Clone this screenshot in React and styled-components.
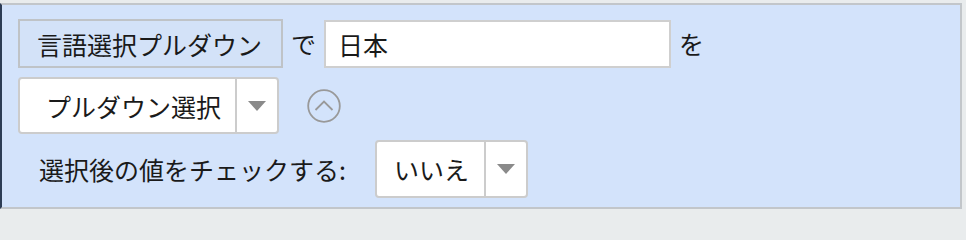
import React from "react";
import styled, { createGlobalStyle } from "styled-components";

const GlobalStyle = createGlobalStyle`
  body {
    margin: 0;
    background: #e9eced;
    font-family: "Noto Sans CJK JP", "Noto Sans", sans-serif;
    color: #1a1a1a;
  }
`;

const Panel = styled.div`
  margin-top: 3px;
  width: 962px;
  box-sizing: border-box;
  background: #d3e3fb;
  border-top: 2px solid #c2c6ca;
  border-bottom: 2px solid #c2c6ca;
  border-right: 2px solid #c2c6ca;
  border-left: 2px solid #2d3d55;
  padding: 14px 16px 9px;
  display: flex;
  flex-direction: column;
  gap: 8px;
`;

const Row = styled.div`
  display: flex;
  align-items: center;
  gap: ${(p) => p.gap || 10}px;
  padding-left: ${(p) => p.indent || 0}px;
  margin-top: ${(p) => p.offset || 0}px;
`;

const Text = styled.span`
  font-size: 25px;
  line-height: 1;
  white-space: nowrap;
`;

const LabelButton = styled.div`
  height: 49px;
  box-sizing: border-box;
  display: flex;
  align-items: center;
  padding: 0 19px 0 17px;
  border: 2px solid #bfc3c7;
  background: #d3e2f8;
  font-size: 25px;
`;

const TextInput = styled.div`
  width: 347px;
  height: 48px;
  box-sizing: border-box;
  display: flex;
  align-items: center;
  padding-left: 12px;
  background: #fff;
  border: 2px solid #cfcfcf;
  font-size: 25px;
`;

const Select = styled.div`
  display: flex;
  align-items: stretch;
  height: ${(p) => p.h}px;
  box-sizing: border-box;
  background: #fff;
  border: 2px solid #cccccc;
  border-radius: 4px;
`;

const SelectValue = styled.div`
  display: flex;
  align-items: center;
  padding: ${(p) => p.pad};
  font-size: 25px;
  border-right: 2px solid #cccccc;
`;

const SelectArrow = styled.div`
  width: 40px;
  display: flex;
  align-items: center;
  justify-content: center;
  &::after {
    content: "";
    border-left: 9.5px solid transparent;
    border-right: 9.5px solid transparent;
    border-top: 10px solid #8a8a8a;
  }
`;

const CollapseIcon = styled.svg`
  width: 34px;
  height: 34px;
  margin-left: 18px;
`;

export default function App() {
  return (
    <>
      <GlobalStyle />
      <Panel>
        <Row gap={8}>
          <LabelButton>言語選択プルダウン</LabelButton>
          <Text>で</Text>
          <TextInput>日本</TextInput>
          <Text>を</Text>
        </Row>
        <Row offset={1}>
          <Select h={57}>
            <SelectValue pad="0 14px 0 26px">プルダウン選択</SelectValue>
            <SelectArrow />
          </Select>
          <CollapseIcon viewBox="0 0 34 34">
            <circle cx="17" cy="17" r="15.8" fill="none" stroke="#999" strokeWidth="1.8" />
            <path d="M8.5 21 L17 12.5 L25.5 21" fill="none" stroke="#999" strokeWidth="1.8" />
          </CollapseIcon>
        </Row>
        <Row indent={21} gap={29} offset={-2}>
          <Text>選択後の値をチェックする:</Text>
          <Select h={58}>
            <SelectValue pad="0 15px 0 17px">いいえ</SelectValue>
            <SelectArrow />
          </Select>
        </Row>
      </Panel>
    </>
  );
}
